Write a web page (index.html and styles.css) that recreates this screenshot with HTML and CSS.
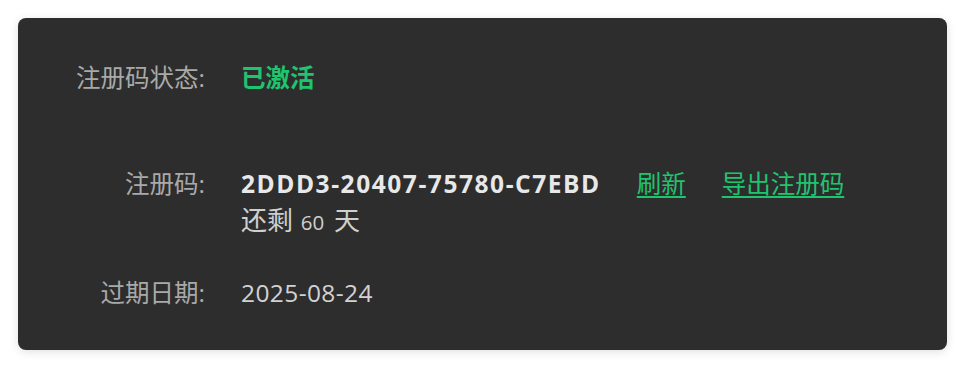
FILE: index.html
```html
<!DOCTYPE html>
<html lang="zh-CN">
<head>
<meta charset="utf-8">
<title>注册码</title>
<link rel="stylesheet" href="styles.css">
</head>
<body>
  <div class="card">
    <div class="row row-status">
      <div class="label">注册码状态:</div>
      <div class="value status">已激活</div>
    </div>
    <div class="row row-code">
      <div class="label">注册码:</div>
      <div class="value">
        <div class="code-line">
          <span class="code">2DDD3-20407-75780-C7EBD</span>
          <a class="link" href="#">刷新</a>
          <a class="link" href="#">导出注册码</a>
        </div>
        <div class="remain">还剩 <span class="days">60</span> 天</div>
      </div>
    </div>
    <div class="row row-expire">
      <div class="label">过期日期:</div>
      <div class="value date">2025-08-24</div>
    </div>
  </div>
</body>
</html>
```

FILE: styles.css
```css
html, body {
  margin: 0;
  padding: 0;
  background: #ffffff;
}
body {
  padding: 18px;
  font-family: "Open Sans", "Noto Sans CJK SC", sans-serif;
  font-size: 24.5px;
}
.card {
  width: 929px;
  height: 332px;
  box-sizing: border-box;
  background: #2d2d2d;
  border-radius: 8px;
  box-shadow: 0 2px 10px rgba(0, 0, 0, 0.12);
  display: flex;
  flex-direction: column;
  padding-top: 42px;
}
.row {
  display: flex;
  align-items: flex-start;
  line-height: 36px;
}
.row-code {
  margin-top: 70px;
}
.row-expire {
  margin-top: 35px;
}
.label {
  width: 223px;
  box-sizing: border-box;
  padding-right: 36px;
  text-align: right;
  color: #a9a9a9;
  flex-shrink: 0;
}
.value {
  color: #d2d2d2;
}
.date {
  letter-spacing: 0.4px;
}
.status {
  color: #1fc46f;
  font-weight: bold;
}
.code-line {
  display: flex;
  align-items: baseline;
  gap: 36px;
}
.code {
  font-weight: bold;
  color: #e8e8e8;
  letter-spacing: 1.55px;
}
.link {
  color: #1fc46f;
  text-decoration: underline;
  text-underline-offset: 3px;
}
.remain {
  color: #cfcfcf;
  font-size: 26px;
}
.days {
  font-size: 20.5px;
  margin: 0 3px 0 1px;
}
```
